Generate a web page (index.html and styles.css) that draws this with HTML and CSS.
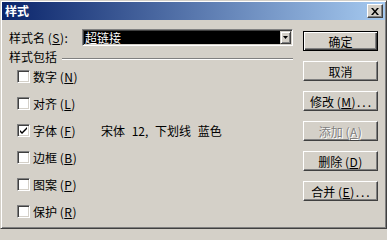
FILE: index.html
```html
<!DOCTYPE html>
<html lang="zh-CN">
<head>
<meta charset="utf-8">
<title>样式</title>
<link rel="stylesheet" href="styles.css">
</head>
<body>
<div class="window">
  <div class="titlebar">
    <span class="title">样式</span>
    <span class="close"><svg width="8" height="7" viewBox="0 0 8 7"><path d="M0 0h2l2 2.5L6 0h2L5 3.5 8 7H6L4 4.5 2 7H0l3-3.5z" fill="#000"/></svg></span>
  </div>
  <div class="content">
    <div class="left">
      <div class="namerow">
        <span class="namelabel">样式名 <span class="mn">(<u>S</u>)</span>:</span>
        <div class="combo">
          <span class="value">超链接</span>
          <span class="drop"><svg width="5" height="3" viewBox="0 0 5 3"><path d="M0 0h5L2.5 3z" fill="#000"/></svg></span>
        </div>
      </div>
      <div class="group">
        <span class="grouplabel">样式包括</span>
        <span class="etch"></span>
      </div>
      <div class="items">
        <div class="item"><span class="cb"></span><span class="lbl">数字 <span class="mn">(<u>N</u>)</span></span></div>
        <div class="item"><span class="cb"></span><span class="lbl">对齐 <span class="mn">(<u>L</u>)</span></span></div>
        <div class="item"><span class="cb"><svg width="9" height="9" viewBox="0 0 9 9"><path d="M1 4l2 2 5-5v2L3 8 1 6z" fill="#000"/></svg></span><span class="lbl">字体 <span class="mn">(<u>F</u>)</span></span><span class="desc">宋体 12, 下划线 蓝色</span></div>
        <div class="item"><span class="cb"></span><span class="lbl">边框 <span class="mn">(<u>B</u>)</span></span></div>
        <div class="item"><span class="cb"></span><span class="lbl">图案 <span class="mn">(<u>P</u>)</span></span></div>
        <div class="item"><span class="cb"></span><span class="lbl">保护 <span class="mn">(<u>R</u>)</span></span></div>
      </div>
    </div>
    <div class="right">
      <div class="btn default">确定</div>
      <div class="btn">取消</div>
      <div class="btn">修改 <span class="mn">(<u>M</u>)</span><span class="dots">...</span></div>
      <div class="btn disabled">添加 <span class="mn">(<u>A</u>)</span></div>
      <div class="btn">删除 <span class="mn">(<u>D</u>)</span></div>
      <div class="btn">合并 <span class="mn">(<u>E</u>)</span><span class="dots">...</span></div>
    </div>
  </div>
</div>
</body>
</html>
```

FILE: styles.css
```css
html, body {
  margin: 0;
  padding: 0;
  background: #d4d0c8;
}
body {
  font-family: "Noto Sans CJK SC", "Noto Sans", sans-serif;
  font-size: 12px;
  color: #000;
}
.window {
  width: 387px;
  height: 229px;
  box-sizing: border-box;
  border: 1px solid;
  border-color: #d4d0c8 #404040 #404040 #d4d0c8;
  box-shadow: inset 1px 1px #fff, inset -1px -1px #808080;
  padding: 1px;
  background: #d4d0c8;
}
.titlebar {
  height: 18px;
  background: linear-gradient(to right, #0a246a, #a6caf0);
  display: flex;
  align-items: center;
  justify-content: space-between;
  padding: 0 2px 0 3px;
}
.title {
  color: #fff;
  font-weight: bold;
  line-height: 14px;
}
.close {
  width: 16px;
  height: 14px;
  box-sizing: border-box;
  background: #d4d0c8;
  border: 1px solid;
  border-color: #fff #404040 #404040 #fff;
  box-shadow: inset -1px -1px #808080;
  display: flex;
  align-items: center;
  justify-content: center;
  padding-right: 1px;
}
.close svg { display: block; }
.content {
  display: flex;
  padding: 9px 0 0 7px;
}
.left {
  width: 284px;
  display: flex;
  flex-direction: column;
}
.namerow {
  display: flex;
  align-items: center;
  height: 17px;
}
.namelabel {
  width: 73px;
  line-height: 14px;
}
u { text-decoration: underline; }
.mn {
  letter-spacing: 0.5px;
}
.dots {
  letter-spacing: 2px;
  margin-left: 1px;
  margin-right: -2px;
}
.combo {
  width: 211px;
  height: 17px;
  box-sizing: border-box;
  border: 1px solid;
  border-color: #808080 #fff #fff #808080;
  box-shadow: inset 1px 1px #404040, inset -1px -1px #d4d0c8;
  padding: 1px;
  display: flex;
  background: #000;
}
.value {
  flex: 1;
  color: #fff;
  line-height: 13px;
  padding-left: 1px;
}
.drop {
  width: 11px;
  height: 13px;
  box-sizing: border-box;
  background: #d4d0c8;
  border: 1px solid;
  border-color: #d4d0c8 #404040 #404040 #d4d0c8;
  box-shadow: inset 1px 1px #fff, inset -1px -1px #808080;
  display: flex;
  align-items: center;
  justify-content: center;
}
.drop svg { display: block; }
.group {
  display: flex;
  height: 13px;
  margin-top: 4px;
}
.grouplabel {
  line-height: 13px;
}
.etch {
  flex: 1;
  margin-left: 5px;
  margin-top: 8px;
  height: 0;
  border-top: 1px solid #808080;
  border-bottom: 1px solid #fff;
}
.items {
  display: flex;
  flex-direction: column;
  gap: 14px;
  margin-top: 7px;
  padding-left: 8px;
}
.item {
  display: flex;
  align-items: center;
  height: 13px;
}
.cb {
  width: 13px;
  height: 13px;
  box-sizing: border-box;
  background: #fff;
  border: 1px solid;
  border-color: #808080 #fff #fff #808080;
  box-shadow: inset 1px 1px #404040, inset -1px -1px #d4d0c8;
  display: flex;
  align-items: center;
  justify-content: center;
}
.cb svg { display: block; }
.lbl {
  width: 68px;
  margin-left: 3px;
  line-height: 13px;
}
.desc {
  line-height: 13px;
  word-spacing: 4px;
}
.right {
  width: 75px;
  margin-left: 10px;
  margin-top: 2px;
  display: flex;
  flex-direction: column;
  gap: 10px;
}
.btn {
  height: 20px;
  box-sizing: border-box;
  border: 1px solid;
  border-color: #fff #404040 #404040 #fff;
  box-shadow: inset -1px -1px #808080, inset 1px 1px #d4d0c8;
  display: flex;
  align-items: center;
  justify-content: center;
  line-height: 13px;
  white-space: pre;
}
.btn.default {
  border-color: #000;
  box-shadow: inset 1px 1px #fff, inset -1px -1px #404040, inset -2px -2px #808080;
}
.btn.disabled {
  color: #808080;
  text-shadow: 1px 1px #fff;
}
```
